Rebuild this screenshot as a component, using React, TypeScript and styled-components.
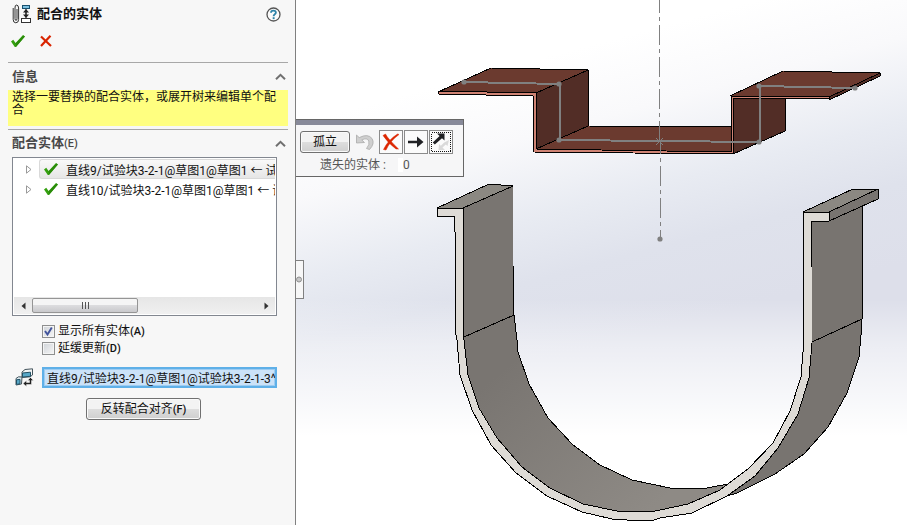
import React, { useState } from "react";
import styled, { createGlobalStyle } from "styled-components";

const GlobalStyle = createGlobalStyle`
  * { box-sizing: border-box; }
  body { margin: 0; }
  body, button, input {
    font-family: Roboto, "Noto Sans CJK SC", sans-serif;
    font-size: 12px;
    color: #111;
  }
  svg { display: block; flex: none; }
`;

const Page = styled.div`
  display: flex;
  min-height: 100vh;
`;

const Panel = styled.aside`
  flex: none;
  width: 296px;
  padding: 0 7px 0 8px;
  background: #f7f7f7;
  border-right: 1px solid #808080;
  display: flex;
  flex-direction: column;
`;

const PlainButton = styled.button`
  display: flex;
  padding: 0;
  border: 0;
  background: none;
`;

const TitleBar = styled.header`
  display: flex;
  align-items: center;
  height: 28px;
  gap: 5px;
  padding: 0 7px 0 4px;
`;

const Title = styled.h1`
  flex: 1;
  margin: 0;
  font-size: 13px;
  line-height: 20px;
  font-weight: 700;
`;

const Actions = styled.div`
  display: flex;
  align-items: center;
  gap: 14px;
  height: 34px;
  padding: 0 2px 8px;
`;

const Section = styled.section`
  border-top: 1px solid #a8a8a8;
`;

const SectionHead = styled.div`
  display: flex;
  align-items: center;
  justify-content: space-between;
  height: 27px;
  padding: 0 2px 0 4px;
`;

const SectionTitle = styled.h2`
  margin: 0;
  font-size: 13px;
  line-height: 20px;
  font-weight: 700;
  color: #484848;
`;

const Key = styled.small`
  font-size: 11px;
  font-weight: 500;
`;

const Notice = styled.p`
  margin: 0 0 3px;
  min-height: 36px;
  padding: 1px 4px;
  line-height: 13px;
  background: #ffff80;
`;

const TreeBox = styled.div`
  display: flex;
  flex-direction: column;
  height: 159px;
  margin: 0 11px 0 4px;
  padding: 1px;
  border: 1px solid #828790;
  background: #fff;
`;

const Tree = styled.ul`
  flex: 1;
  margin: 0;
  padding: 0;
  list-style: none;
  overflow: hidden;
`;

const TreeRow = styled.li`
  display: flex;
  align-items: center;
  height: 20px;
  gap: 7px;
  padding-left: 12px;
`;

const TreeItem = styled.span<{ $active?: boolean }>`
  flex: 1;
  min-width: 0;
  display: flex;
  align-items: center;
  gap: 7px;
  height: 20px;
  padding-left: 3px;
  overflow: hidden;
  white-space: nowrap;
  border: 1px solid ${(p) => (p.$active ? "#d9d9d9" : "transparent")};
  border-right: 0;
  border-radius: 3px 0 0 3px;
  background: ${(p) => (p.$active ? "linear-gradient(#f9f9f9, #e6e6e6)" : "none")};
`;

const ScrollBar = styled.div`
  display: flex;
  align-items: center;
  height: 17px;
  background: linear-gradient(#e6e6e6, #f0f0f0);
`;

const ScrollArrow = styled(PlainButton)`
  width: 18px;
  height: 16px;
  align-items: center;
  justify-content: center;
`;

const ScrollTrack = styled.div`
  flex: 1;
`;

const ScrollThumb = styled.div`
  display: flex;
  align-items: center;
  justify-content: center;
  width: 106px;
  height: 15px;
  border: 1px solid #959595;
  border-radius: 2px;
  background: linear-gradient(#f5f5f5 0 45%, #dcdcde 50%, #c9c9cc);
`;

const Options = styled.div`
  display: flex;
  flex-direction: column;
  padding: 7px 34px 10px;
`;

const Option = styled.label`
  display: flex;
  align-items: center;
  gap: 3px;
  height: 17px;
  line-height: 17px;
  white-space: nowrap;
`;

const OptionBox = styled.span`
  display: grid;
  > * { grid-area: 1 / 1; }
  > svg { pointer-events: none; }
`;

const Tick = styled.input`
  appearance: none;
  width: 13px;
  height: 13px;
  margin: 0;
  border: 1px solid #8e8f8f;
  background: linear-gradient(135deg, #cfd3d8, #f6f6f6);
  box-shadow: inset 0 0 0 1px #f4f4f4;
`;

const PickRow = styled.div`
  display: flex;
  align-items: center;
  gap: 8px;
  padding: 0 11px 0 7px;
`;

const PickField = styled.input`
  flex: 1;
  min-width: 0;
  height: 21px;
  padding: 0 0 0 3px;
  border: 2px solid #5fb0e8;
  background: #cbe2f8;
  box-shadow: inset 0 0 0 1px #9dccf2;
  outline: 0;
`;

const PushButton = styled.button`
  min-width: 49px;
  height: 22px;
  padding: 0 12px;
  border: 1px solid #707070;
  border-radius: 3px;
  background: linear-gradient(#f3f3f3 0 48%, #dedede 50%, #cfcfcf);
  box-shadow: inset 0 0 0 1px #fafafa;
  line-height: 18px;
  white-space: nowrap;
`;

const ButtonRow = styled.div`
  display: grid;
  padding: 10px 87px 10px 78px;
`;

const Viewport = styled.main`
  position: relative;
  flex: 1;
  min-width: 0;
  overflow: hidden;
  background:
    linear-gradient(rgba(255, 255, 255, 0) 57%, rgba(255, 255, 255, 0.45) 66%, #fff 83%),
    linear-gradient(165deg, #fff 18%, #f9f9fb 29%, #e8ebf2 41%, #dfe2ec 50%, #dddfea 62%);
`;

const Model = styled.svg`
  width: 100%;
  height: 100vh;
`;

const PanelHandle = styled.button`
  position: absolute;
  left: 0;
  top: 260px;
  display: flex;
  align-items: center;
  width: 8px;
  height: 39px;
  padding: 0;
  border: 1px solid #808080;
  border-left: 0;
  background: #f7f7f7;
`;

const FloatBar = styled.section`
  position: absolute;
  left: 0;
  top: 119px;
  width: 168px;
  border: 1px solid #666;
  border-left: 0;
  background: #f6f6f7;
`;

const FloatGrip = styled.div`
  height: 5px;
  background: #878999;
`;

const FloatTools = styled.div`
  display: flex;
  align-items: center;
  padding: 5px 8px 0 4px;
  gap: 1px;
`;

const ToolButton = styled.button<{ $flat?: boolean }>`
  display: flex;
  align-items: center;
  justify-content: center;
  width: 24px;
  height: 24px;
  padding: 0;
  border: 1px solid ${(p) => (p.$flat ? "transparent" : "#8b8b8b")};
  background: ${(p) => (p.$flat ? "none" : "#fbfbfb")};
  margin: ${(p) => (p.$flat ? "0 1px 0 2px" : "0")};
`;

const MissingRow = styled.div`
  display: flex;
  align-items: center;
  gap: 12px;
  height: 22px;
  line-height: 14px;
  padding-left: 24px;
  color: #555;
`;

const Count = styled.output`
  padding-left: 5px;
  background: linear-gradient(90deg, #fff 5px, transparent 5px);
`;

const CheckMark = () => (
  <svg width="16" height="14" viewBox="0 0 16 14">
    <path d="M1 7.5 L3.2 5.8 L5.6 9 L13 1 L15 2.5 L6 13 L4.8 13 Z" fill="#35a010" />
    <path d="M5.6 9.4 L13.5 1.5 L14.8 2.6 L6 12.8 Z" fill="#2a8a0b" />
  </svg>
);

const CrossMark = () => (
  <svg width="12" height="12" viewBox="0 0 12 12">
    <path d="M1 1.5 L11 11 M10.5 .8 L1 11" stroke="#d92400" strokeWidth="2.2" fill="none" />
  </svg>
);

const MateIcon = () => (
  <svg width="20" height="20" viewBox="0 0 20 20" fill="none">
    <path d="M1.2 4 V15.5 Q1.2 18.8 3.8 18.8 Q6.6 18.8 6.6 15.5 V4 Q6.6 1 4.2 1 Q3 1 3 4 V14.5 Q3 16.5 4 16.5 Q5 16.5 5 14.5 V5" stroke="#333" />
    <rect x="10.5" y="1.5" width="7" height="3" fill="#7cc0e0" stroke="#17506e" />
    <path d="M14 5.5 V13.5" stroke="#222" strokeWidth="1.6" />
    <path d="M11 8.5 L14 5 L17 8.5 Z M11 10.5 L14 14 L17 10.5 Z" fill="#222" />
    <rect x="9.5" y="14.5" width="9" height="4" fill="#fff" stroke="#333" />
  </svg>
);

const HelpIcon = () => (
  <svg width="15" height="15" viewBox="0 0 15 15" fill="none">
    <circle cx="7.5" cy="7.5" r="6.5" fill="#fbfbfb" stroke="#555" strokeWidth="1.3" />
    <path d="M5 5.8 Q5 3.6 7.4 3.6 Q9.9 3.6 9.9 5.6 Q9.9 6.7 8.6 7.4 Q7.6 8 7.6 9.2" stroke="#2f83a8" strokeWidth="1.8" />
    <rect x="6.7" y="10.2" width="1.9" height="1.9" fill="#2f83a8" />
  </svg>
);

const Caret = () => (
  <svg width="11" height="8" viewBox="0 0 11 8">
    <path d="M1 6.2 L5.5 1.8 L10 6.2" fill="none" stroke="#707070" strokeWidth="2" />
  </svg>
);

const Expander = () => (
  <svg width="6" height="9" viewBox="0 0 6 9">
    <path d="M.5 .8 L5 4.5 L.5 8.2 Z" fill="#fff" stroke="#999" />
  </svg>
);

const ArrowHead = ({ right }: { right?: boolean }) => (
  <svg width="5" height="8" viewBox="0 0 5 8">
    <path d={right ? "M.5 .5 L4.5 4 L.5 7.5 Z" : "M4.5 .5 L.5 4 L4.5 7.5 Z"} fill="#333" />
  </svg>
);

const PartsIcon = () => (
  <svg width="19" height="20" viewBox="0 0 19 20" strokeWidth="1" strokeLinejoin="round">
    <path d="M7 4 L10 1.5 L17.5 .8 L17.5 7 L15 8.8 L7 9.5 Z" fill="#f2f4f5" stroke="#44545c" />
    <path d="M7.5 5 L15.5 4.2 V8.3 L7.5 9 Z" fill="#58a8c8" stroke="#225064" />
    <path d="M1 10.5 L3.5 8.8 L7 9 L6.5 16 L1 17 Z" fill="#dceaf0" stroke="#44545c" />
    <path d="M1.5 11.8 L5 11.4 V15.8 L1.5 16.4 Z" fill="#58a8c8" stroke="#225064" />
    <path d="M8 15.5 L11.5 12.5 V14.5 H14.5 V12.5 H12.5 L15.5 9.5 L18.5 12.5 H16.5 V16.5 H11.5 V18.5 Z" fill="#222" stroke="#f7f7f7" strokeWidth=".5" />
  </svg>
);

const UndoIcon = () => (
  <svg width="20" height="18" viewBox="0 0 20 18">
    <path d="M1.5 2 V10 L9.5 9.5 L6.8 7 Q12 4.2 13.8 8 Q15 11.5 11.5 15.5 L14.5 16.5 Q20.2 10.5 17 5.5 Q13 .2 4.2 4.6 Z" fill="#cfcfcf" stroke="#aaa" strokeWidth=".8" />
  </svg>
);

const DeleteIcon = () => (
  <svg width="18" height="18" viewBox="0 0 18 18">
    <path d="M1 2.5 L3.5 1 Q6 6 16.5 16 L14 16 Q6 10 1 2.5 Z M15.5 1 L17 1.5 Q8 8 4 17 L1.5 16.5 Q6 7 15.5 1 Z" fill="#dc2600" stroke="#dc2600" strokeWidth=".5" />
  </svg>
);

const NextIcon = () => (
  <svg width="18" height="14" viewBox="0 0 18 14">
    <path d="M1 5.8 H10 V1.5 L16.5 7 L10 12.5 V8.2 H1 Z" fill="#202124" />
  </svg>
);

const SwapIcon = () => (
  <svg width="22" height="22" viewBox="0 0 22 22">
    <rect x="1.5" y="1.5" width="19" height="19" fill="none" stroke="#111" strokeDasharray="1 1" shapeRendering="crispEdges" />
    <path d="M19 9 L17.5 15 L15.8 13.4 L12.5 16.6 L15 19 L8.5 19 L9 13 L10.8 14.8 L14.2 11.6 Z" fill="#dadada" />
    <path d="M7 2.5 H14.5 V9.5 L12 7.2 L4.8 13.5 L2.8 11.5 L9.6 5 Z" fill="#202124" />
  </svg>
);

const BlueTick = () => (
  <svg width="13" height="13" viewBox="0 0 13 13">
    <path d="M3 6 L5.5 9.5 L9.8 2.5" fill="none" stroke="#42549c" strokeWidth="1.9" />
  </svg>
);

const innerLeft =
  "463,208 463,318 464,340 468,375 479,408 497,438 522,467 550,488 583,504 617,511 655,511 660,510 688,504 720,490";
const innerRight = "748,469 773,443 790,411 801,377 803,352 803,212";
const outerBack =
  "829,212 829,221 811,221 812,267 812,343 809,378 798,414 778,448 755,476 727,496";
const outerFront =
  "692,513 660,518 654,520 627,520 612,519 582,512 547,496 516,473 491,445 472,410 460,375 457,340 455,330 455,232 454,216 437,216 437,208";

const Drawing = () => (
  <Model viewBox="296 0 611 525" preserveAspectRatio="xMinYMin meet" role="img" aria-label="模型">
    <defs>
      <linearGradient id="bend" x1="0" y1="0" x2=".7" y2="1">
        <stop offset=".45" stopColor="#797571" />
        <stop offset="1" stopColor="#8e8a85" />
      </linearGradient>
    </defs>
    <g stroke="#000" strokeWidth="1" strokeLinejoin="round" shapeRendering="crispEdges">
      <polygon points="536,93 588,70 588,126 536,149" fill="#522d26" />
      <polygon points="536,149 588,126 731,127 731,152" fill="#6b3a2f" />
      <polygon points="733,98 785,98 785,131 733,154" fill="#522d26" />
      <polygon points="438,92 491,68 588,70 536,93" fill="#6b3a2f" />
      <polygon points="730,96 783,71 880,73 829,97" fill="#6b3a2f" />
      <polygon points="829,97 880,73 880,76 829,100" fill="#522d26" />
      <polygon points="438,91 536,93 536,149 731,152 731,96 829,97 829,99 733,98 733,154 533,152 533,96 438,94" fill="#cf8374" />

      <polygon
        points={`${innerLeft} 728,484 707,488 670,488 632,480 600,465 573,445 548,418 529,384 517,349 517,340 514,315 513,265 513,186`}
        fill="url(#bend)"
      />
      <polygon
        points="811,221 862,200 862,319 861,335 859,357 847,393 828,427 804,454 775,474 737,493 727,496 755,476 778,448 798,414 809,378 812,343"
        fill="#787470"
      />
      <path d="M464 337 L514 315 M812 342 L862 319" fill="none" />
      <polygon points="437,208 489,184 513,186 463,208" fill="#8b8882" />
      <polygon points="803,212 853,189 878,189 829,212" fill="#8b8882" />
      <polygon points="829,212 878,189 878,199 829,221" fill="#787470" />
      <polygon points={`${innerLeft} ${innerRight} ${outerBack} ${outerFront}`} fill="#dedbd6" />
    </g>
    <g fill="none" stroke="#808080" shapeRendering="crispEdges">
      <path d="M659 0 V141 M660 141 V239" strokeDasharray="20 4 4 4" strokeDashoffset="7" />
      <path d="M656 138 L663 145 M663 138 L656 145 M655 141 H664" />
      <path d="M464 82 L560 84 V140 L659 141 L760 142 V86 L855 88" strokeWidth="2" />
    </g>
    <g fill="#808080">
      {[[464, 82], [559, 84], [559, 140], [759, 142], [759, 86], [855, 88], [660, 239]].map(([x, y]) => (
        <circle key={`${x}-${y}`} cx={x} cy={y} r="2.6" />
      ))}
    </g>
  </Model>
);

const entities = [
  "直线9/试验块3-2-1@草图1@草图1 ← 试验块3-2-1",
  "直线10/试验块3-2-1@草图1@草图1 ← 试验块3-2-1",
];

export default function App() {
  const [showAll, setShowAll] = useState(true);
  const [defer, setDefer] = useState(false);

  return (
    <>
      <GlobalStyle />
      <Page>
        <Panel>
          <TitleBar>
            <MateIcon />
            <Title>配合的实体</Title>
            <PlainButton aria-label="帮助"><HelpIcon /></PlainButton>
          </TitleBar>
          <Actions>
            <PlainButton aria-label="确定"><CheckMark /></PlainButton>
            <PlainButton aria-label="取消"><CrossMark /></PlainButton>
          </Actions>
          <Section>
            <SectionHead>
              <SectionTitle>信息</SectionTitle>
              <PlainButton aria-label="折叠信息"><Caret /></PlainButton>
            </SectionHead>
            <Notice>选择一要替换的配合实体，或展开树来编辑单个配合</Notice>
          </Section>
          <Section>
            <SectionHead>
              <SectionTitle>配合实体<Key>(E)</Key></SectionTitle>
              <PlainButton aria-label="折叠配合实体"><Caret /></PlainButton>
            </SectionHead>
            <TreeBox>
              <Tree>
                {entities.map((name, i) => (
                  <TreeRow key={name}>
                    <PlainButton aria-label="展开"><Expander /></PlainButton>
                    <TreeItem $active={i === 0}>
                      <CheckMark />
                      {name}
                    </TreeItem>
                  </TreeRow>
                ))}
              </Tree>
              <ScrollBar>
                <ScrollArrow aria-label="向左滚动"><ArrowHead /></ScrollArrow>
                <ScrollTrack>
                  <ScrollThumb>
                    <svg width="8" height="7" viewBox="0 0 8 7" shapeRendering="crispEdges">
                      <path d="M1 0 V7 M4 0 V7 M7 0 V7" stroke="#555" />
                    </svg>
                  </ScrollThumb>
                </ScrollTrack>
                <ScrollArrow aria-label="向右滚动"><ArrowHead right /></ScrollArrow>
              </ScrollBar>
            </TreeBox>
            <Options>
              <Option>
                <OptionBox>
                  <Tick type="checkbox" checked={showAll} onChange={(e) => setShowAll(e.target.checked)} />
                  {showAll && <BlueTick />}
                </OptionBox>
                <span>显示所有实体<Key>(A)</Key></span>
              </Option>
              <Option>
                <OptionBox>
                  <Tick type="checkbox" checked={defer} onChange={(e) => setDefer(e.target.checked)} />
                  {defer && <BlueTick />}
                </OptionBox>
                <span>延缓更新<Key>(D)</Key></span>
              </Option>
            </Options>
            <PickRow>
              <PartsIcon />
              <PickField aria-label="替换实体" readOnly value="直线9/试验块3-2-1@草图1@试验块3-2-1-3^" />
            </PickRow>
            <ButtonRow>
              <PushButton>反转配合对齐<Key>(F)</Key></PushButton>
            </ButtonRow>
          </Section>
        </Panel>
        <Viewport>
          <Drawing />
          <FloatBar>
            <FloatGrip />
            <FloatTools>
              <PushButton>孤立</PushButton>
              <ToolButton $flat aria-label="撤销"><UndoIcon /></ToolButton>
              <ToolButton aria-label="删除"><DeleteIcon /></ToolButton>
              <ToolButton aria-label="下一个"><NextIcon /></ToolButton>
              <ToolButton aria-label="反转"><SwapIcon /></ToolButton>
            </FloatTools>
            <MissingRow>
              <span>遗失的实体 :</span>
              <Count>0</Count>
            </MissingRow>
          </FloatBar>
          <PanelHandle aria-label="折叠面板">
            <svg width="7" height="7" viewBox="0 0 7 7">
              <circle cx="3" cy="3.5" r="2.5" fill="#c8c8c8" stroke="#909090" />
            </svg>
          </PanelHandle>
        </Viewport>
      </Page>
    </>
  );
}
